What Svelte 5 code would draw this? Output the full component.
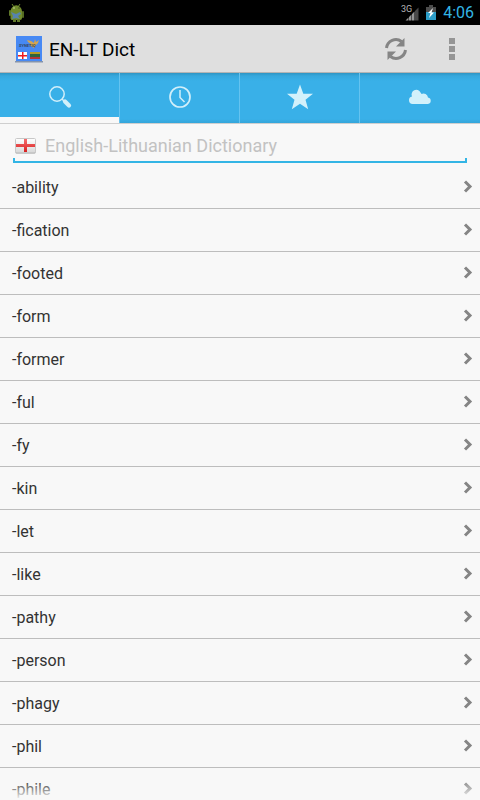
<script>
  const words = [
    '-ability', '-fication', '-footed', '-form', '-former', '-ful', '-fy', '-kin',
    '-let', '-like', '-pathy', '-person', '-phagy', '-phil', '-phile'
  ];
  const tabs = [
    { id: 'search', label: 'Search' },
    { id: 'history', label: 'History' },
    { id: 'favourites', label: 'Favourites' },
    { id: 'online', label: 'Online' }
  ];
  let active = $state('search');
  let query = $state('');
</script>

<div class="app">
  <div class="status">
    <svg class="droid" width="18" height="20" viewBox="0 0 18 20" aria-hidden="true">
      <path d="M4 1l2 3M12 1l-2 3" stroke="#6b8a2c" />
      <path d="M2.500 8a5.800 6.500 0 0 1 11.500 0v7a2 2 0 0 1-2 2H5a2 2 0 0 1-2.500-2z" fill="#718b2d" />
      <rect x="1" y="7" width="2" height="6" rx="1" fill="#60792a" />
      <rect x="14" y="8" width="2" height="7" rx="1" fill="#536b22" />
      <rect x="5" y="16" width="3" height="3" fill="#60792a" />
      <rect x="9" y="16" width="3" height="3" fill="#60792a" />
      <circle cx="6" cy="5" r="0.800" fill="#cfd8a8" /><circle cx="11" cy="5" r="0.800" fill="#3d4b1c" />
      <path d="M3 9l5 2 4-2 1 2-3 2 2 3-4-1-4 1 1-3z" fill="#5683ad" />
    </svg>
    <svg class="signal" width="19" height="20" viewBox="0 0 19 20" aria-hidden="true">
      <text x="0" y="9" font-size="9" fill="#b5b5b5">3G</text>
      <path d="M4.500 17.500l3-3v3zM8 17.500V14l2.500-2.500v6zM11 17.500V11l2.500-2.500v9z" fill="#959595" />
      <path d="M14 17.500V8l3.500-3.500v13z" fill="#484848" />
    </svg>
    <svg class="battery" width="10" height="16" viewBox="0 0 10 16" aria-hidden="true">
      <path d="M3 0h4v2h3v6H0V2h3z" fill="#4d4d4d" />
      <path d="M0 7h10v8H0z" fill="#2c9dc8" />
      <path d="M7 3L2 8h2.500L3 13l5-5.500H5.500z" fill="#fff" />
    </svg>
    <time>4:06</time>
  </div>

  <header>
    <svg class="logo" width="28" height="28" viewBox="0 0 28 28" aria-hidden="true">
      <path d="M1 1h26v25H1z" fill="#4789f4" />
      <path d="M0 26h28v1.500H0z" fill="#8293ad" />
      <path d="M12 5l4 1 3 2 1-4 1 3 3-2-1 3-2 2-2 3-3-2-2-2h2l-3-2z" fill="#d6a54e" />
      <text x="4" y="12" font-size="4" font-weight="700" fill="#34475f">SYNETIQ</text>
      <path d="M3 17h9v7H3z" fill="#fff" />
      <path d="M7 17h1.500v7H7zM3 20h9v1.500H3z" fill="#ef1c20" />
      <path d="M15 17h10v2.500H15z" fill="#b69c25" />
      <path d="M15 19h10v3H15z" fill="#2c6440" />
      <path d="M15 22h10v2H15z" fill="#af343a" />
    </svg>
    <h1>EN-LT Dict</h1>
    <button class="refresh" aria-label="Refresh">
      <svg width="24" height="24" viewBox="0 0 24 24" fill="none" aria-hidden="true">
        <path d="M2.500 11A9.500 9.500 0 0 1 17.500 4.500" stroke="#858585" stroke-width="3" />
        <path d="M20.500 1v8.500H12z" fill="#858585" />
        <path d="M21.500 13A9.500 9.500 0 0 1 6.500 19.500" stroke="#858585" stroke-width="3" />
        <path d="M3.500 23v-8.500H12z" fill="#858585" />
      </svg>
    </button>
    <button class="more" aria-label="More options">
      <svg width="6" height="22" viewBox="0 0 6 22" fill="#959595" aria-hidden="true">
        <path d="M0 0h6v6H0zM0 8h6v6H0zM0 16h6v6H0z" />
      </svg>
    </button>
  </header>

  <nav>
    {#each tabs as tab (tab.id)}
      <button class:active={active === tab.id} aria-label={tab.label} onclick={() => (active = tab.id)}>
        <svg width="28" height="28" viewBox="0 0 28 28" fill="none" aria-hidden="true">
          {#if tab.id === 'search'}
            <circle cx="11" cy="11" r="7.200" stroke="#d2effa" stroke-width="1.500" />
            <path d="M16 16l2.500 2.500" stroke="#d2effa" stroke-width="1.500" />
            <path d="M19 18.500l4 4" stroke="#d2effa" stroke-width="4.200" stroke-linecap="round" />
          {:else if tab.id === 'history'}
            <circle cx="14" cy="14" r="10" stroke="#d2effa" stroke-width="1.700" />
            <path d="M14 7v7.500l4.500 4.500" stroke="#d2effa" stroke-width="1.500" />
          {:else if tab.id === 'favourites'}
            <path d="M14 1.500l3.300 9.200H27l-7.500 6 2.700 9.500L14 20.700l-8.200 5.500 2.700-9.500L1 10.700h9.700z" fill="#d2f1fb" />
          {:else}
            <path d="M6.500 21a3.800 3.800 0 0 1-.5-7.500 4.500 4.500 0 0 1 8.500-4 4 4 0 0 1 1 1.500 4.500 4.500 0 0 1 6.500 3.500 3.300 3.300 0 0 1 0 6.500z" fill="#d2f1fb" />
          {/if}
        </svg>
      </button>
    {/each}
  </nav>

  <main>
    <label class="search">
      <svg width="22" height="16" viewBox="0 0 22 16" aria-hidden="true">
        <defs>
          <linearGradient id="cloth" x2="0" y2="1">
            <stop offset="0" stop-color="#fff" /><stop offset="1" stop-color="#d8d8d8" />
          </linearGradient>
          <linearGradient id="cross" x2="0" y2="1">
            <stop offset="0" stop-color="#f56e6e" /><stop offset="1" stop-color="#d81f1f" />
          </linearGradient>
        </defs>
        <rect x="0.500" y="1.500" width="20" height="14" rx="1" fill="#999" />
        <rect x="0.500" y="0.500" width="20" height="14" rx="1" fill="url(#cloth)" stroke="#c8c8c8" />
        <path d="M9 1h3v5h8v3h-8v5H9V9H1V6h8z" fill="url(#cross)" />
      </svg>
      <input type="text" bind:value={query} placeholder="English-Lithuanian Dictionary" aria-label="English-Lithuanian Dictionary" />
    </label>
    <ul>
      {#each words as word (word)}
        <li>
          <a href="#{word}">
            <span>{word}</span>
            <svg width="10" height="14" viewBox="0 0 10 14" fill="none" aria-hidden="true">
              <path d="M2 1.500l5 5-5 5" stroke="#858585" stroke-width="3" />
            </svg>
          </a>
        </li>
      {/each}
    </ul>
  </main>
</div>

<style>
  :global(body) { margin: 0; background: #f8f8f8; }
  .app {
    display: flex;
    flex-direction: column;
    height: 100vh;
    overflow: hidden;
    background: #f8f8f8;
    color: #333;
    font-family: Roboto, "Noto Sans", sans-serif;
  }
  button { border: 0; padding: 0; background: none; cursor: pointer; }
  svg { display: block; flex: none; }
  .status {
    display: flex;
    align-items: center;
    flex: none;
    height: 25px;
    padding: 0 6px 0 8px;
    background: #000;
  }
  .signal { margin-left: auto; }
  .battery { margin-left: 6px; }
  time { margin-left: 7px; color: #33b5e5; font-size: 16px; line-height: 24px; }
  header {
    display: flex;
    align-items: center;
    flex: none;
    box-sizing: border-box;
    height: 48px;
    padding: 0 4px 0 15px;
    border-bottom: 1px solid #b4b4b4;
    background: #dfdfdf;
  }
  h1 { flex: 1; margin: 0 0 0 6px; padding-top: 2px; color: #000; font-size: 19px; font-weight: 400; line-height: 24px; }
  header button { display: flex; align-items: center; justify-content: center; width: 64px; height: 47px; }
  header .more { width: 48px; }
  nav {
    display: flex;
    flex: none;
    height: 50px;
    border-bottom: 1px solid #cfcfcf;
    background: linear-gradient(#2e95c4, #36a8dd 3px, #39b0e8 8px, #39b0e8 46px, #34a5da);
  }
  nav button {
    display: flex;
    align-items: center;
    justify-content: center;
    box-sizing: border-box;
    width: 25%;
    padding-bottom: 2px;
    border-right: 1px solid #65c3f0;
  }
  nav button:last-child { border-right: 0; }
  nav .active { box-shadow: inset 0 -6px #f8f8f8; }
  main { flex: 1; min-height: 0; overflow: hidden; position: relative; }
  main::after {
    content: "";
    position: absolute;
    inset: auto 0 0;
    height: 20px;
    background: linear-gradient(#f8f8f800, #f8f8f8);
    pointer-events: none;
  }
  .search {
    display: flex;
    align-items: center;
    gap: 8px;
    height: 37px;
    margin: 2px 13px 3px;
    padding: 3px 2px 0;
    box-sizing: border-box;
    background:
      linear-gradient(#33b5e5, #33b5e5) 0 100% / 100% 2px no-repeat,
      linear-gradient(#33b5e5, #33b5e5) 0 100% / 2px 5px no-repeat,
      linear-gradient(#33b5e5, #33b5e5) 100% 100% / 2px 5px no-repeat;
  }
  input {
    flex: 1;
    min-width: 0;
    padding: 0;
    border: 0;
    outline: 0;
    background: none;
    color: #333;
    font: 18px/24px Roboto, "Noto Sans", sans-serif;
  }
  input::placeholder { color: #c2c2c2; opacity: 1; }
  ul { margin: 0; padding: 0; list-style: none; }
  li { border-bottom: 1px solid #bdbdbd; }
  a {
    display: flex;
    align-items: center;
    justify-content: space-between;
    height: 42px;
    padding: 0 7px 0 12px;
    color: #333;
    font-size: 16px;
    line-height: 24px;
    text-decoration: none;
  }
  a span { padding-top: 2px; }
</style>
